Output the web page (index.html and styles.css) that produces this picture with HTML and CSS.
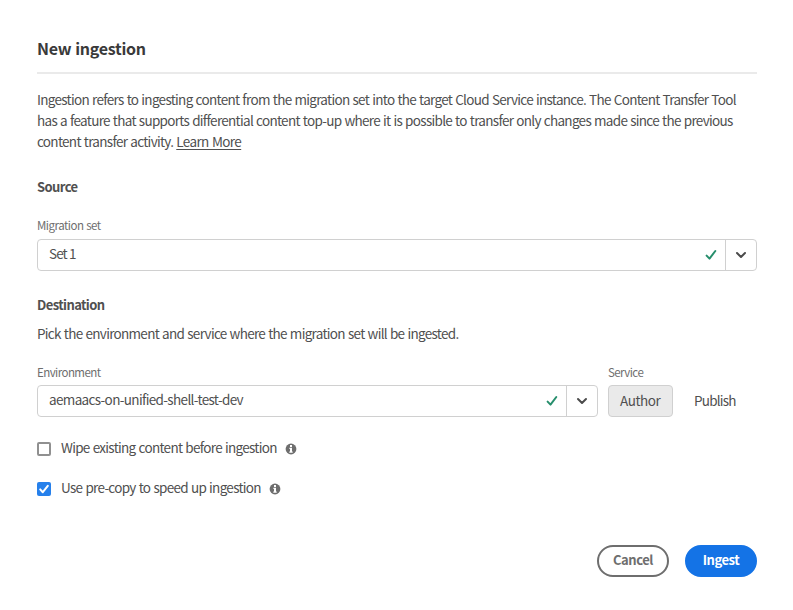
FILE: index.html
```
<!DOCTYPE html>
<html lang="en">
<head>
<meta charset="utf-8">
<title>New ingestion</title>
<link rel="stylesheet" href="styles.css">
</head>
<body>
<main class="dialog">
  <h1 class="title">New ingestion</h1>
  <p class="intro">Ingestion refers to ingesting content from the migration set into the target Cloud Service instance. The Content Transfer Tool<br>has a feature that supports differential content top-up where it is possible to transfer only changes made since the previous<br>content transfer activity. <a class="link">Learn More</a></p>

  <h2 class="section source">Source</h2>
  <div class="label set-label">Migration set</div>
  <div class="picker">
    <div class="value"><span class="text tight">Set 1</span>
      <svg class="check" viewBox="0 0 12 12"><path d="M1.6 6.6 4.5 9.6 10.3 2"/></svg></div>
    <div class="toggle"><svg class="chevron" viewBox="0 0 12 12"><path d="M2 4 6 8 10 4"/></svg></div>
  </div>

  <h2 class="section destination">Destination</h2>
  <p class="hint">Pick the environment and service where the migration set will be ingested.</p>
  <div class="target">
    <div class="environment">
      <div class="label">Environment</div>
      <div class="picker">
        <div class="value"><span class="text slug">aemaacs-on-unified-shell-test-dev</span>
          <svg class="check" viewBox="0 0 12 12"><path d="M1.6 6.6 4.5 9.6 10.3 2"/></svg></div>
        <div class="toggle"><svg class="chevron" viewBox="0 0 12 12"><path d="M2 4 6 8 10 4"/></svg></div>
      </div>
    </div>
    <div class="service">
      <div class="label">Service</div>
      <div class="options"><div class="option selected">Author</div><div class="option publish">Publish</div></div>
    </div>
  </div>

  <div class="choices">
    <div class="choice"><span class="box"></span><span class="choice-text">Wipe existing content before ingestion</span>
      <svg class="info" viewBox="0 0 12 12"><circle cx="6" cy="6" r="5.4"/><path d="M5 2.1h2v1.8H5zM4.4 4.8H7v3.7h.7v1.2H4.3V8.5H5V6h-.6z"/></svg></div>
    <div class="choice"><span class="box checked"><svg viewBox="0 0 14 14"><path d="M3.2 7.4 5.8 10.2 10.8 3.8"/></svg></span><span class="choice-text">Use pre-copy to speed up ingestion</span>
      <svg class="info" viewBox="0 0 12 12"><circle cx="6" cy="6" r="5.4"/><path d="M5 2.1h2v1.8H5zM4.4 4.8H7v3.7h.7v1.2H4.3V8.5H5V6h-.6z"/></svg></div>
  </div>

  <div class="actions"><div class="button cancel">Cancel</div><div class="button ingest">Ingest</div></div>
</main>
</body>
</html>
```

FILE: styles.css
```
* { box-sizing: border-box; }
body {
  margin: 0;
  background: #fff;
  color: #505050;
  font: 13.5px/20px "Noto Sans CJK SC", "Noto Sans", sans-serif;
  letter-spacing: -0.7px;
  word-spacing: 0.7px;
  white-space: nowrap;
}
h1, h2, p { margin: 0; }
svg { display: block; flex: none; }
.dialog { width: 757px; padding: 38px 0 0 37px; }
.title {
  height: 36px;
  border-bottom: 2px solid #eaeaea;
  color: #3a3a3a;
  font-size: 16px;
  font-weight: 600;
  letter-spacing: -0.28px;
}
.intro { margin-top: 15px; line-height: 21px; }
.link { text-decoration: underline; text-underline-offset: 2px; letter-spacing: -0.6px; }
.section { font-size: 13px; font-weight: 700; letter-spacing: -0.6px; }
.source { margin-top: 25px; }
.destination { margin-top: 24px; }
.label { margin-bottom: 5px; color: #6e6e6e; font-size: 11.5px; line-height: 16px; letter-spacing: -0.56px; }
.set-label { margin: 20px 0 6px; letter-spacing: -0.5px; }
.picker { display: flex; height: 32px; border: 1px solid #d0d0d0; border-radius: 4px; }
.value { display: flex; flex: 1; align-items: center; justify-content: space-between; padding: 0 8px 0 11px; }
.text { padding-bottom: 4px; }
.tight { letter-spacing: -0.9px; word-spacing: 0; }
.slug { letter-spacing: -0.65px; }
.check { width: 12px; height: 12px; fill: none; stroke: #268e6c; stroke-width: 2; stroke-linecap: round; stroke-linejoin: round; }
.toggle { display: flex; width: 31px; align-items: center; justify-content: center; border-left: 1px solid #d0d0d0; }
.chevron { width: 12px; height: 12px; fill: none; stroke: #4b4b4b; stroke-width: 2; stroke-linecap: round; stroke-linejoin: round; }
.hint { margin-top: 8px; }
.target { display: flex; gap: 10px; margin-top: 21px; }
.environment { width: 561px; }
.options { display: flex; gap: 9px; }
.option { height: 32px; padding: 4px 11px 0; border: 1px solid transparent; border-radius: 4px; letter-spacing: -0.45px; }
.selected { width: 65px; border-color: #d0d0d0; background: #eaeaea; }
.publish { letter-spacing: -0.8px; }
.choices { display: grid; gap: 20px; margin-top: 22px; }
.choice { display: flex; height: 20px; align-items: center; }
.box { width: 14px; height: 14px; margin-right: 10px; border: 2px solid #909090; border-radius: 2px; }
.checked { border: 0; background: #2680eb; }
.checked path { fill: none; stroke: #fff; stroke-width: 2; stroke-linecap: round; stroke-linejoin: round; }
.choice-text { padding-bottom: 4px; }
.info { width: 12px; height: 12px; margin-left: 8px; fill: #6e6e6e; }
.info path { fill: #fff; }
.actions { display: flex; gap: 16px; justify-content: flex-end; margin-top: 46px; }
.button { width: 72px; height: 32px; border: 2px solid #6e6e6e; border-radius: 16px; padding-top: 2px; color: #6e6e6e; font-size: 13px; font-weight: 700; line-height: 21px; letter-spacing: -0.45px; text-align: center; }
.ingest { border-color: #1473e6; background: #1473e6; color: #fff; }
```
